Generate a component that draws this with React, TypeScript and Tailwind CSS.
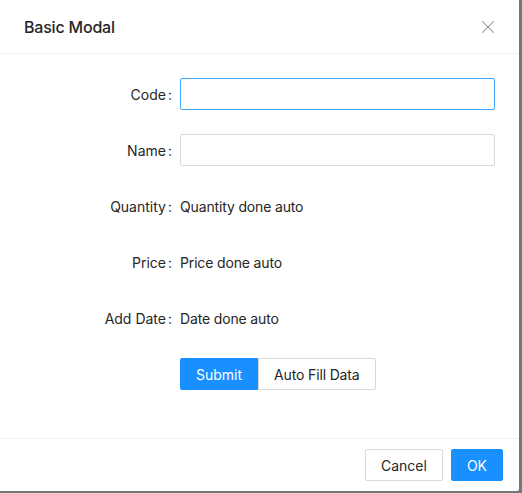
import { X } from "lucide-react";

const fields = [
  { label: "Code", input: true, focused: true },
  { label: "Name", input: true, focused: false },
  { label: "Quantity", text: "Quantity done auto" },
  { label: "Price", text: "Price done auto" },
  { label: "Add Date", text: "Date done auto" },
];

export default function App() {
  return (
    <div
      className="h-[493px] w-[522px] overflow-hidden bg-[#777777] text-[14px] text-[#262626]"
      style={{ fontFamily: "Inter, 'Noto Sans', sans-serif" }}
    >
      <div className="w-[519px] rounded-br-[2px] bg-white">
        <div className="flex h-[54px] items-center justify-between border-b border-[#f0f0f0] px-6">
          <h2 className="text-[16px] font-medium leading-[22px] tracking-[-0.2px] text-[#262626]">Basic Modal</h2>
          <X size={22} strokeWidth={1.1} className="mr-[-4px] text-[#8c8c8c]" />
        </div>

        <div className="flex flex-col gap-6 px-6 pb-12 pt-6">
          {fields.map((f) => (
            <div key={f.label} className="flex h-8 items-center">
              <label className="w-[156px] shrink-0 pr-2 text-right">
                {f.label}
                <span className="ml-[2px]">:</span>
              </label>
              {f.input ? (
                <input
                  className={`h-8 w-[315px] rounded-[2px] border px-[11px] outline-none ${
                    f.focused ? "border-[#40a9ff]" : "border-[#d9d9d9]"
                  }`}
                />
              ) : (
                <span className="tracking-[-0.15px]">{f.text}</span>
              )}
            </div>
          ))}
          <div className="flex h-8 pl-[156px]">
            <button className="h-8 rounded-l-[2px] border border-[#1890ff] bg-[#1890ff] px-[15px] text-white">
              Submit
            </button>
            <button className="h-8 rounded-r-[2px] border border-[#d9d9d9] bg-white px-[15px] tracking-[-0.15px]">
              Auto Fill Data
            </button>
          </div>
        </div>

        <div className="flex h-[53px] items-center justify-end gap-2 border-t border-[#f0f0f0] px-4">
          <button className="h-8 rounded-[2px] border border-[#d9d9d9] bg-white px-[15px]">Cancel</button>
          <button className="h-8 rounded-[2px] border border-[#1890ff] bg-[#1890ff] px-[15px] text-white">
            OK
          </button>
        </div>
      </div>

      <div className="mt-[-3px] flex text-[14px] text-[#1c1c1c]">
        <span className="ml-5 w-[302px]">Bespoke Cotton Soap</span>
        <span className="w-[111px]">665192</span>
        <span>259</span>
      </div>
    </div>
  );
}
